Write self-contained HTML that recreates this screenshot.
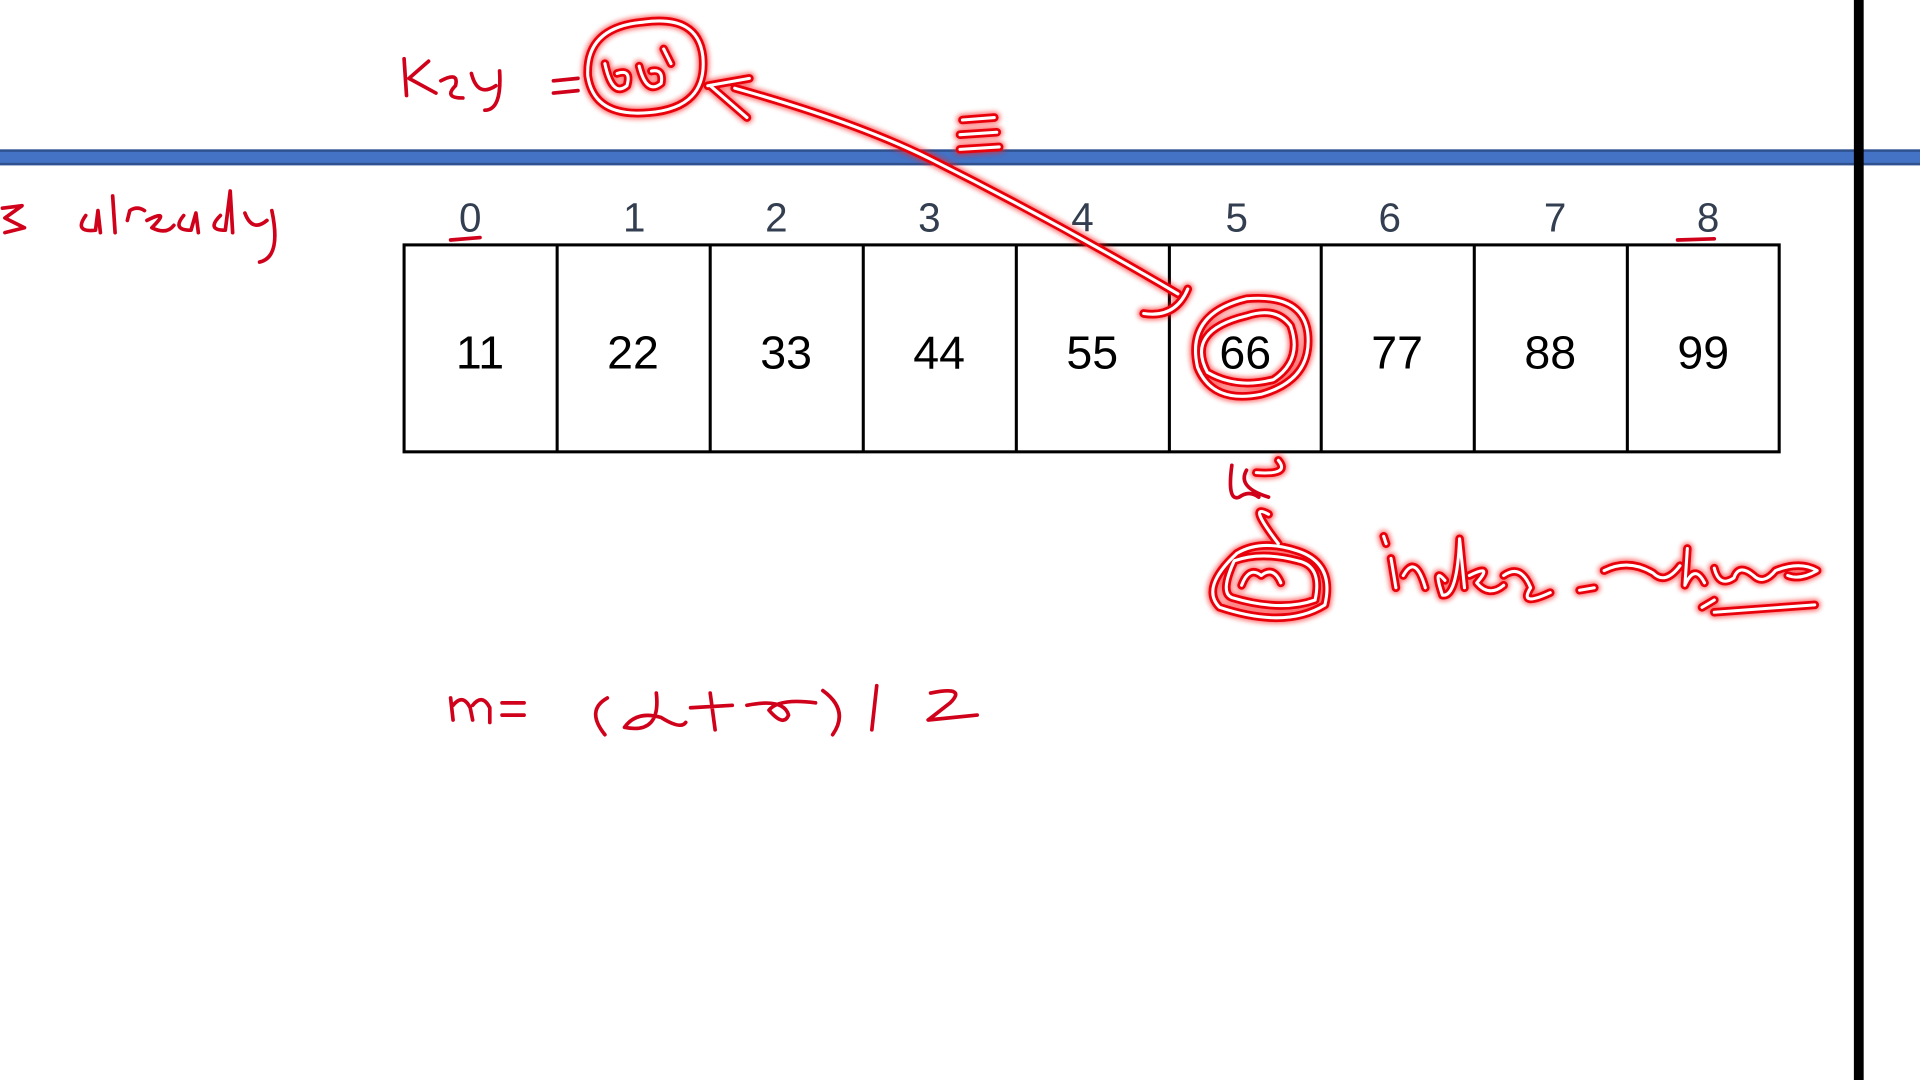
<!DOCTYPE html>
<html><head><style>html,body{margin:0;padding:0;background:#fff;overflow:hidden}svg{display:block}</style></head>
<body>
<svg width="1920" height="1080" viewBox="0 0 1568 882" xmlns="http://www.w3.org/2000/svg">
<defs><filter id="g" x="-20%" y="-20%" width="140%" height="140%"><feGaussianBlur stdDeviation="2"/></filter></defs>
<rect width="1568" height="882" fill="#fff"/>
<rect x="0" y="122" width="1568" height="13" fill="#4472c4"/>
<rect x="0" y="122" width="1568" height="2" fill="#2f528f"/>
<rect x="0" y="133" width="1568" height="2" fill="#2f528f"/>
<rect x="1514" y="0" width="8" height="882" fill="#000"/>
<g stroke="#000" stroke-width="2.5" fill="none">
<rect x="330" y="200" width="1123" height="169"/>
<line x1="455" y1="200" x2="455" y2="369"/><line x1="580" y1="200" x2="580" y2="369"/>
<line x1="705" y1="200" x2="705" y2="369"/><line x1="830" y1="200" x2="830" y2="369"/>
<line x1="955" y1="200" x2="955" y2="369"/><line x1="1079" y1="200" x2="1079" y2="369"/>
<line x1="1204" y1="200" x2="1204" y2="369"/><line x1="1329" y1="200" x2="1329" y2="369"/>
</g>
<g font-family="Liberation Sans, sans-serif" font-size="38" text-anchor="middle" fill="#000">
<text x="392" y="301">11</text><text x="517" y="301">22</text><text x="642" y="301">33</text>
<text x="767" y="301">44</text><text x="892" y="301">55</text><text x="1017" y="301">66</text>
<text x="1141" y="301">77</text><text x="1266" y="301">88</text><text x="1391" y="301">99</text>
</g>
<g font-family="Liberation Sans, sans-serif" font-size="33" text-anchor="middle" fill="#333f50">
<text x="384" y="189">0</text><text x="518" y="189">1</text><text x="634" y="189">2</text>
<text x="759" y="189">3</text><text x="884" y="189">4</text><text x="1010" y="189">5</text>
<text x="1135" y="189">6</text><text x="1270" y="189">7</text><text x="1395" y="189">8</text>
</g>
<g stroke="#d0021b" stroke-width="3" fill="none" stroke-linecap="round" stroke-linejoin="round">
<path d="M368 196 L392 194"/><path d="M1370 196 L1400 195"/>
<path d="M330 48 L332 78 M350 50 L334 64 L356 76 M360 66 Q375 58 372 70 Q362 80 378 80 M385 60 Q390 80 405 70 M408 58 Q410 90 396 90 M452 66 L472 64 M452 76 L472 74"/>
<path d="M2 170 L18 168 L4 178 L20 186 L4 190 M70 176 Q60 190 78 188 L80 172 L82 190 M92 160 L94 190 M104 180 L106 172 Q112 168 118 172 M120 180 Q140 170 124 186 Q136 192 142 184 M150 176 Q140 188 156 188 L160 174 L162 190 M180 176 Q168 188 184 188 L188 156 L190 190 M200 174 Q206 190 218 180 M222 172 Q230 210 212 214"/>
<path d="M368 570 L370 588 M370 576 Q378 566 384 578 L386 588 M386 576 Q394 566 400 578 L400 590 M410 574 L428 574 M410 584 L428 584 M496 570 Q478 580 494 600 M536 566 Q540 600 510 594 Q520 580 540 586 Q556 596 560 590 M564 578 L598 576 M580 566 L584 596 M610 576 Q640 570 644 584 Q640 594 628 580 Q636 570 666 574 M672 564 Q694 580 680 600 M716 560 L712 596 M760 566 Q790 560 776 574 L758 588 L798 584"/>
<path d="M1006 380 Q1002 410 1012 406 Q1020 400 1028 406 M1018 384 Q1010 398 1036 406"/>
</g>
<g fill="none" stroke-linecap="round" stroke-linejoin="round">
<g stroke="#ff1a1a" stroke-width="10" filter="url(#g)" opacity="0.6">
<path id="h" d="M526 18 Q478 22 480 62 Q485 96 530 92 Q578 88 574 46 Q570 12 526 18 M494 52 Q500 80 512 70 Q516 56 504 60 M522 54 Q528 78 540 68 Q542 56 532 58 M542 40 L548 52 M600 72 Q700 100 760 130 Q860 180 962 240 M578 70 L612 64 M580 70 L610 96 M970 236 Q960 260 934 256 M786 98 L812 96 M784 110 L814 108 M784 122 L816 120 M1018 244 Q968 256 978 300 Q990 330 1030 322 Q1072 310 1068 272 Q1064 240 1018 244 M1018 258 Q968 270 986 304 Q1010 318 1040 310 Q1064 294 1054 266 Q1042 250 1018 258 M1026 386 Q1054 388 1044 376 M1036 420 Q1018 410 1044 444 M1010 452 Q980 480 996 496 Q1050 514 1082 494 Q1090 460 1060 450 Q1030 440 1010 452 M1008 458 Q996 484 1006 488 Q1046 500 1074 490 Q1080 462 1060 458 Q1030 450 1008 458 M1014 478 Q1020 462 1030 470 Q1040 462 1046 476 M1130 438 L1132 444 M1136 456 L1140 480 M1146 470 Q1156 452 1164 480 M1180 474 Q1170 462 1178 486 Q1190 488 1192 440 L1196 480 M1200 470 Q1220 460 1206 476 Q1216 488 1228 478 M1228 470 Q1242 460 1250 480 Q1240 496 1266 484 M1290 482 L1302 480 M1310 466 Q1330 456 1350 468 Q1360 478 1372 462 M1378 448 L1376 478 Q1384 460 1392 476 M1400 464 Q1404 480 1416 472 Q1420 460 1432 470 Q1440 478 1450 466 Q1470 458 1484 466 Q1470 474 1460 470 M1400 500 L1482 494 M1390 496 L1400 490"/>
</g>
<use href="#h" stroke="#e8000b" stroke-width="7"/>
<use href="#h" stroke="#fff" stroke-width="2.5"/>
</g>
</svg>
</body></html>
